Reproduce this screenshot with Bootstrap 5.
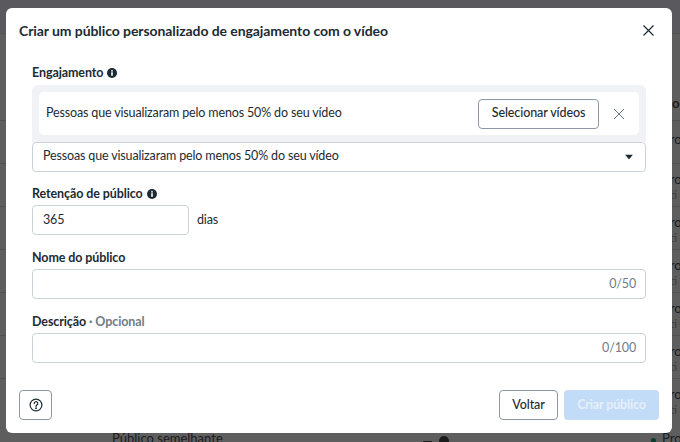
<!DOCTYPE html>
<html lang="pt-BR">
<head>
  <meta charset="UTF-8" />
  <title>Criar um público personalizado</title>
  <link href="https://cdn.jsdelivr.net/npm/bootstrap@5.3.3/dist/css/bootstrap.min.css" rel="stylesheet">
  <style>
    html, body {
      height: 442px;
      overflow: hidden;
    }

    body {
      background: #5e5e5e;
      font-family: Lato, "Liberation Sans", sans-serif;
      font-size: 12.5px;
      color: #1c2b33;
    }

    /* pagina escurecida atras do modal */
    .fundo {
      position: absolute;
      inset: 0;
      overflow: hidden;
    }

    .fundo-topo {
      height: 33px;
      background: #5a5a5e;
    }

    .fundo-cabecalho {
      height: 87px;
      border-top: 1px solid #555;
      padding: 62px 0 0 672px;
      font-size: 13px;
      font-weight: 700;
      line-height: 14px;
      color: #1a1b1d;
    }

    .fundo-linha {
      height: 43px;
      border-top: 1px solid #525252;
      padding: 8px 0 0 662px;
      font-size: 13px;
      line-height: 15px;
      color: #1a1b1d;
      white-space: nowrap;
    }

    .fundo-linha.unica {
      padding-top: 11px;
    }

    .fundo-linha small {
      display: block;
      font-size: 12px;
      color: #3e3e3e;
    }

    .fundo-baixo {
      position: absolute;
      left: 0;
      right: 0;
      top: 431px;
      font-size: 13px;
      line-height: 14px;
      color: #1a1b1d;
      white-space: nowrap;
    }

    .fundo-baixo > * {
      position: absolute;
      top: 0;
    }

    .fb-nome { left: 112px; }
    .fb-info { left: 423px; top: 5px; }
    .fb-ponto { left: 651px; top: 7px; width: 5px; height: 5px; border-radius: 50%; background: #0b3d2c; }
    .fb-status { left: 662px; }

    .janela.modal-content {
      position: absolute;
      left: 6px;
      top: 8px;
      width: 666px;
      height: 425px;
      border-radius: 6px;
      border: 0;
      background: #fff;
    }

    .janela .modal-header {
      height: 45px;
      padding: 0 18px 0 13px;
      border: 0;
    }

    .janela .modal-title {
      font-size: 14px;
      font-weight: 700;
      letter-spacing: -.08px;
      color: #1c2b33;
    }

    .janela .modal-body {
      padding: 12px 26px 0;
      letter-spacing: -.15px;
    }

    .janela .modal-footer {
      padding: 0 13px 13px;
      border: 0;
    }

    .janela .modal-footer > * {
      margin: 0;
    }

    .rotulo {
      font-weight: 700;
      line-height: 16px;
      height: 16px;
      margin-bottom: 4px;
      letter-spacing: -.1px;
      color: #1c2b33;
    }

    .bloco .rotulo {
      height: 17px;
      padding-top: 1px;
      margin-bottom: 3px;
    }

    .rotulo .opcional {
      color: #6f7c87;
    }

    .grupo {
      background: #f0f2f5;
      border-radius: 6px 6px 0 0;
      padding: 7px 7px 7px;
    }

    .grupo-item {
      background: #fff;
      border-radius: 5px;
      height: 43px;
      padding: 0 7px;
    }

    .form-control.campo,
    .form-select.campo {
      height: 30px;
      min-height: 30px;
      border: 1px solid #cbd2d9;
      border-radius: 4px;
      background-image: none;
      padding: 0 10px 1px;
      font-size: 12.5px;
      letter-spacing: -.15px;
      color: #1c2b33;
    }

    .contador,
    .seta {
      position: absolute;
      top: 50%;
      transform: translateY(-50%);
    }

    .contador {
      right: 10px;
      color: #6f7c87;
    }

    .seta {
      right: 13px;
    }

    .campo-curto {
      width: 157px;
    }

    .bloco {
      margin-top: 14px;
    }

    .bloco.primeiro {
      margin-top: 13px;
    }

    .btn.btn-claro {
      height: 30px;
      font-size: 12.5px;
      font-weight: 500;
      line-height: 1;
      letter-spacing: -.1px;
      color: #1c2b33;
      background: #fff;
      border: 1px solid #8d98a6;
      border-radius: 4px;
      padding: 0;
    }

    .btn-selecionar { width: 121px; }
    .btn-voltar { width: 59px; }
    .btn-ajuda { width: 33px; }

    .btn.btn-azul {
      height: 30px;
      width: 95px;
      font-size: 12.5px;
      font-weight: 700;
      line-height: 1;
      letter-spacing: -.15px;
      padding: 0;
      color: #e6f0fa;
      background: #c2dbf6;
      border: 0;
      border-radius: 4px;
    }

    .acoes {
      gap: 6px;
    }

    .remover {
      margin: 0 8px 0 15px;
    }
  </style>
</head>
<body>

  <!-- Fundo da pagina -->
  <div class="fundo">
    <div class="fundo-topo"></div>
    <div class="fundo-cabecalho">oo</div>
    <div class="fundo-linha unica">Pro</div>
    <div class="fundo-linha">Pro<small>Ati</small></div>
    <div class="fundo-linha">Pro<small>Ati</small></div>
    <div class="fundo-linha">Pro<small>Ati</small></div>
    <div class="fundo-linha">Pro<small>Ati</small></div>
    <div class="fundo-linha">Pro<small>Ati</small></div>
    <div class="fundo-linha">Pro<small>Ati</small></div>
  </div>
  <div class="fundo-baixo">
    <span class="fb-nome">Público semelhante</span>
    <svg class="fb-info" width="26" height="10" viewBox="0 0 26 10"><rect x="0" y="5" width="9" height="2" fill="#1c1c1c"/><circle cx="21" cy="5" r="5" fill="#1c1c1c"/></svg>
    <span class="fb-ponto"></span>
    <span class="fb-status">Pro</span>
  </div>

  <!-- Modal -->
  <div class="janela modal-content d-flex flex-column">
    <div class="modal-header d-flex align-items-center justify-content-between">
      <h5 class="modal-title">Criar um público personalizado de engajamento com o vídeo</h5>
      <svg width="11" height="11" viewBox="0 0 11 11" fill="none" stroke="#1c2b33" stroke-width="1.2"><path d="M.5.5l10 10M10.5.5l-10 10"/></svg>
    </div>

    <div class="modal-body">
      <div class="rotulo d-flex align-items-center gap-1">Engajamento
        <svg width="10" height="10" viewBox="0 0 10 10"><circle cx="5" cy="5" r="5" fill="#1c2b33"/><rect x="4.2" y="4.2" width="1.6" height="3.6" fill="#fff"/><rect x="4.2" y="2.1" width="1.6" height="1.5" fill="#fff"/></svg>
      </div>
      <div class="grupo">
        <div class="grupo-item d-flex align-items-center">
          <span class="flex-grow-1">Pessoas que visualizaram pelo menos 50% do seu vídeo</span>
          <button type="button" class="btn btn-claro btn-selecionar">Selecionar vídeos</button>
          <svg class="remover" width="10" height="10" viewBox="0 0 10 10" fill="none" stroke="#67788a" stroke-width="1"><path d="M0 0l10 10M10 0L0 10"/></svg>
        </div>
      </div>
      <div class="position-relative">
        <select class="form-select campo">
          <option>Pessoas que visualizaram pelo menos 50% do seu vídeo</option>
        </select>
        <svg class="seta" width="8" height="5" viewBox="0 0 8 5"><path d="M0 0h8L4 5z" fill="#1c2b33"/></svg>
      </div>

      <div class="bloco primeiro">
        <div class="rotulo d-flex align-items-center gap-1">Retenção de público
          <svg width="10" height="10" viewBox="0 0 10 10"><circle cx="5" cy="5" r="5" fill="#1c2b33"/><rect x="4.2" y="4.2" width="1.6" height="3.6" fill="#fff"/><rect x="4.2" y="2.1" width="1.6" height="1.5" fill="#fff"/></svg>
        </div>
        <div class="d-flex align-items-center gap-2">
          <input class="form-control campo campo-curto" value="365">
          <span>dias</span>
        </div>
      </div>

      <div class="bloco">
        <div class="rotulo">Nome do público</div>
        <div class="position-relative">
          <input class="form-control campo">
          <span class="contador">0/50</span>
        </div>
      </div>

      <div class="bloco">
        <div class="rotulo">Descrição <span class="opcional">· Opcional</span></div>
        <div class="position-relative">
          <input class="form-control campo">
          <span class="contador">0/100</span>
        </div>
      </div>
    </div>

    <div class="modal-footer d-flex justify-content-between">
      <button type="button" class="btn btn-claro btn-ajuda d-flex align-items-center justify-content-center" aria-label="Ajuda">
        <svg width="14" height="14" viewBox="0 0 14 14" fill="none" stroke="#1c2b33" stroke-width="1.2"><circle cx="7" cy="7" r="5.9"/><path d="M5.2 5.6a1.8 1.8 0 1 1 2.7 1.5c-.6.4-.9.7-.9 1.3" stroke-linecap="round"/><circle cx="7" cy="10.2" r=".4"/></svg>
      </button>
      <div class="acoes d-flex">
        <button type="button" class="btn btn-claro btn-voltar">Voltar</button>
        <button type="button" class="btn btn-azul">Criar público</button>
      </div>
    </div>
  </div>

  <script src="https://cdn.jsdelivr.net/npm/bootstrap@5.3.3/dist/js/bootstrap.bundle.min.js"></script>
</body>
</html>
